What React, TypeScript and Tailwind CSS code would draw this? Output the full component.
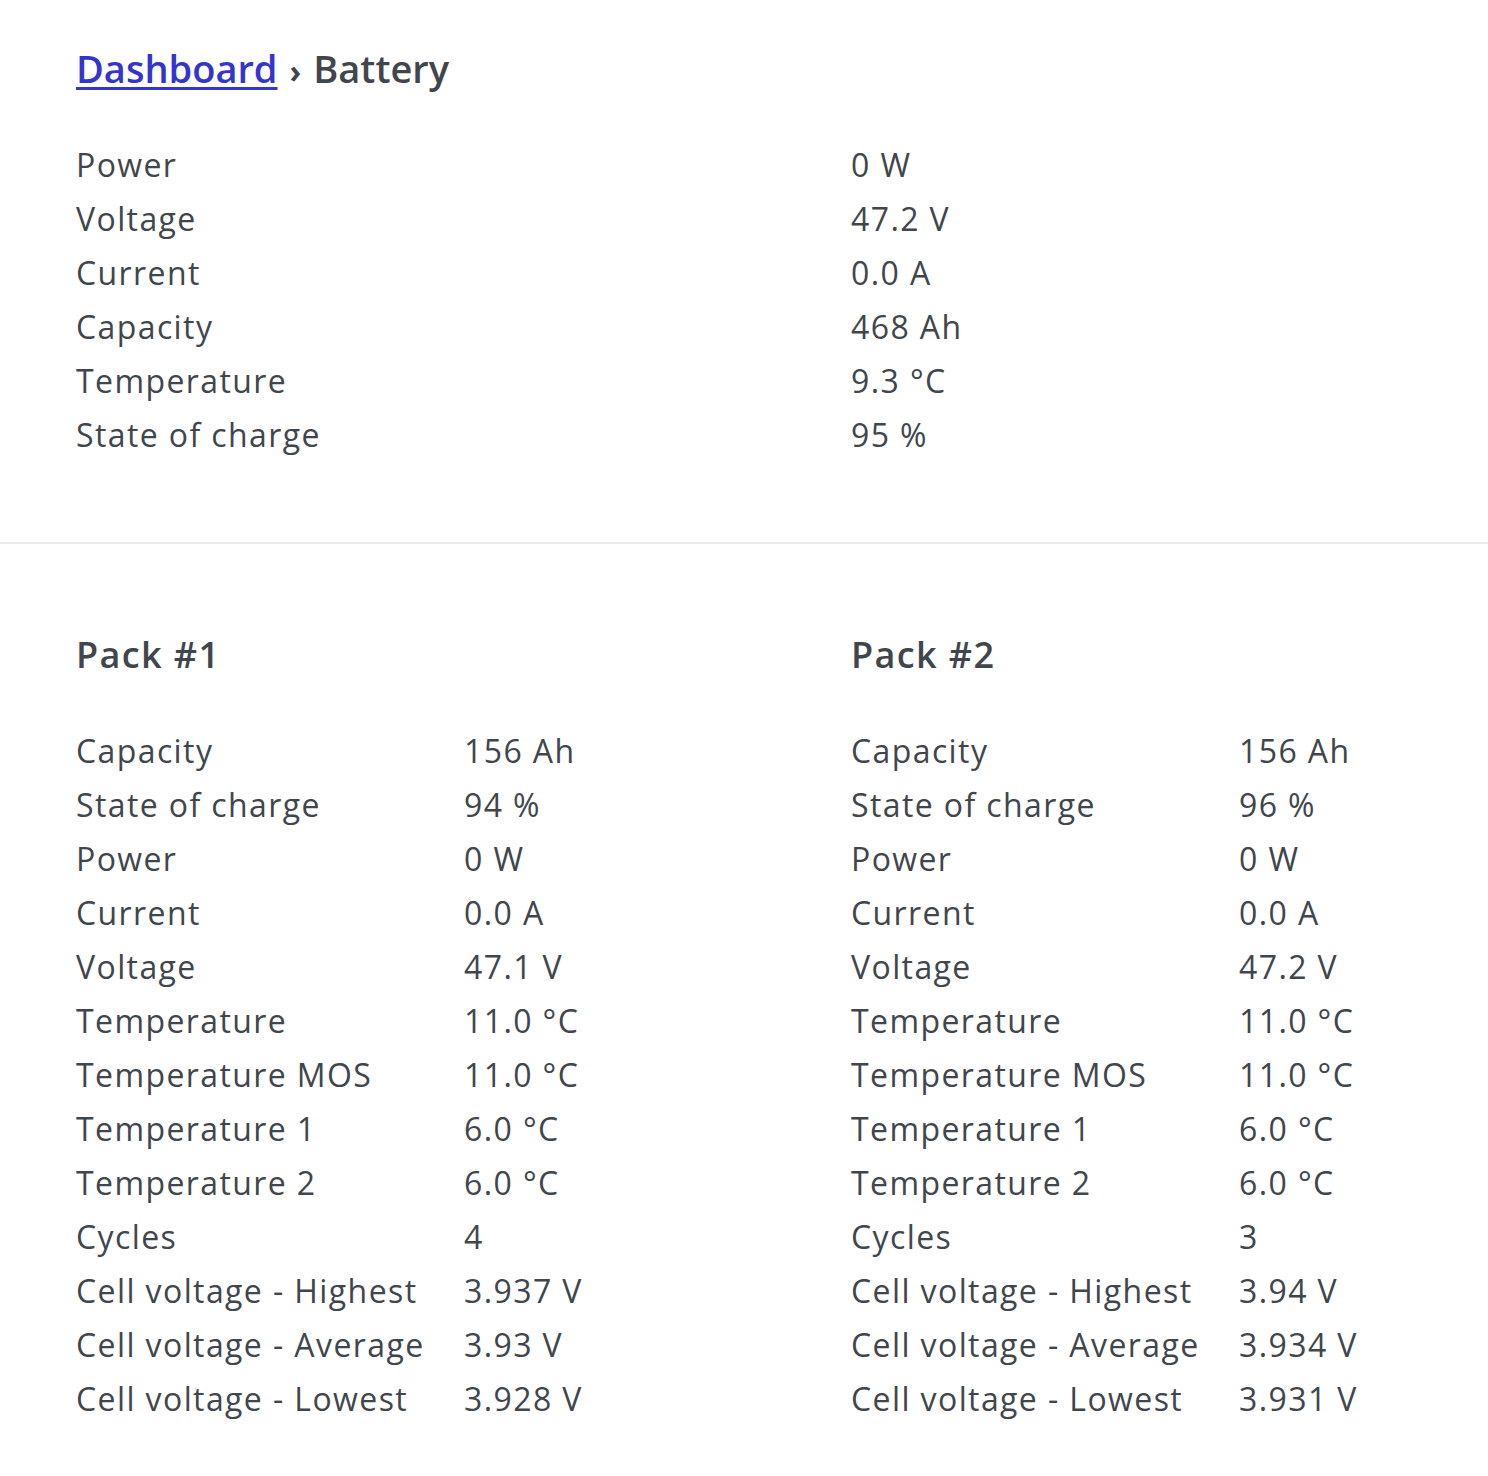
const summary: [string, string][] = [
  ["Power", "0 W"],
  ["Voltage", "47.2 V"],
  ["Current", "0.0 A"],
  ["Capacity", "468 Ah"],
  ["Temperature", "9.3 °C"],
  ["State of charge", "95 %"],
];

const packs: { name: string; rows: [string, string][] }[] = [
  {
    name: "Pack #1",
    rows: [
      ["Capacity", "156 Ah"],
      ["State of charge", "94 %"],
      ["Power", "0 W"],
      ["Current", "0.0 A"],
      ["Voltage", "47.1 V"],
      ["Temperature", "11.0 °C"],
      ["Temperature MOS", "11.0 °C"],
      ["Temperature 1", "6.0 °C"],
      ["Temperature 2", "6.0 °C"],
      ["Cycles", "4"],
      ["Cell voltage - Highest", "3.937 V"],
      ["Cell voltage - Average", "3.93 V"],
      ["Cell voltage - Lowest", "3.928 V"],
    ],
  },
  {
    name: "Pack #2",
    rows: [
      ["Capacity", "156 Ah"],
      ["State of charge", "96 %"],
      ["Power", "0 W"],
      ["Current", "0.0 A"],
      ["Voltage", "47.2 V"],
      ["Temperature", "11.0 °C"],
      ["Temperature MOS", "11.0 °C"],
      ["Temperature 1", "6.0 °C"],
      ["Temperature 2", "6.0 °C"],
      ["Cycles", "3"],
      ["Cell voltage - Highest", "3.94 V"],
      ["Cell voltage - Average", "3.934 V"],
      ["Cell voltage - Lowest", "3.931 V"],
    ],
  },
];

function Rows({ rows, labelWidth }: { rows: [string, string][]; labelWidth: string }) {
  return (
    <div className={`grid ${labelWidth} text-[32px] leading-[54px] tracking-[1.4px]`}>
      {rows.map(([label, value]) => (
        <div key={label} className="contents">
          <span>{label}</span>
          <span>{value}</span>
        </div>
      ))}
    </div>
  );
}

export default function App() {
  return (
    <div className="min-h-[1476px] bg-white font-['Open_Sans',sans-serif] text-[#41464d]">
      <section className="px-[76px] pt-[38px] pb-[80px]">
        <h1 className="mb-[37px] text-[38px] font-semibold leading-[60px]">
          <a href="#" className="text-[#3434cf] underline underline-offset-4">
            Dashboard
          </a>
          <span className="mx-[12px] text-[32px] font-bold">›</span>
          Battery
        </h1>
        <Rows rows={summary} labelWidth="grid-cols-[775px_1fr]" />
      </section>

      <hr className="border-t-2 border-[#ebebeb]" />

      <section className="grid grid-cols-[775px_1fr] px-[76px] pt-[84px]">
        {packs.map((p) => (
          <div key={p.name}>
            <h2 className="mb-[42px] text-[36px] font-semibold leading-[54px] tracking-[1.4px]">
              {p.name}
            </h2>
            <Rows rows={p.rows} labelWidth="grid-cols-[388px_1fr]" />
          </div>
        ))}
      </section>
    </div>
  );
}
